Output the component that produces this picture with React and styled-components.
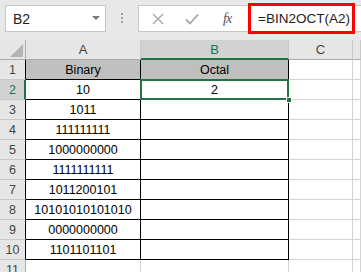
import React from "react";
import styled, { createGlobalStyle, css } from "styled-components";

const binary = [
  "10",
  "1011",
  "111111111",
  "1000000000",
  "1111111111",
  "1011200101",
  "10101010101010",
  "0000000000",
  "1101101101",
];

const GREEN = "#217346";

const GlobalStyle = createGlobalStyle`
  html, body {
    margin: 0;
    padding: 0;
    background: #ffffff;
    font-family: "Liberation Sans", Arial, sans-serif;
  }
`;

const Page = styled.div`
  width: 361px;
  height: 272px;
  overflow: hidden;
  background: #ffffff;
`;

const TopBar = styled.div`
  display: flex;
  align-items: flex-start;
  height: 40px;
  padding-left: 5px;
  background: #e8e8e8;
  box-sizing: border-box;
`;

const NameBox = styled.div`
  margin-top: 5px;
  width: 101px;
  height: 27px;
  box-sizing: border-box;
  background: #fff;
  border: 1px solid #c6c6c6;
  display: flex;
  align-items: center;
  justify-content: space-between;
  padding: 0 5px 0 7px;
  font-size: 14px;
  color: #222;
`;

const Arrow = styled.span`
  width: 0;
  height: 0;
  border-left: 4px solid transparent;
  border-right: 4px solid transparent;
  border-top: 4px solid #7a7a7a;
  margin-bottom: 2px;
`;

const Grip = styled.div`
  width: 32px;
  height: 36px;
  display: flex;
  align-items: center;
  justify-content: center;
`;

const FormulaBox = styled.div`
  margin-top: 5px;
  flex: 1;
  height: 27px;
  box-sizing: border-box;
  background: #fff;
  border: 1px solid #c6c6c6;
  border-right: none;
  display: flex;
  align-items: flex-start;
`;

const Tools = styled.div`
  width: 109px;
  height: 25px;
  display: flex;
  align-items: center;
  padding-left: 13px;
  gap: 21px;
  box-sizing: border-box;
`;

const Fx = styled.span`
  font-family: "Liberation Serif", serif;
  font-style: italic;
  font-size: 14px;
  color: #555;
  margin-left: 3px;
  letter-spacing: -1px;
`;

const Highlight = styled.div`
  margin-top: -3px;
  width: 107px;
  height: 31px;
  box-sizing: border-box;
  border: 3px solid #f00;
  display: flex;
  align-items: center;
  padding-left: 7px;
  font-size: 13.5px;
  color: #222;
`;

const Sheet = styled.div`
  display: grid;
  grid-template-columns: 26px 115px 148px 64px 1fr;
  grid-auto-rows: 20px;
  font-size: 12.5px;
`;

const ColHead = styled.div`
  box-sizing: border-box;
  background: ${(p) => (p.$active ? "#d2d2d2" : "#e6e6e6")};
  border-right: 1px solid #c8c8c8;
  border-bottom: ${(p) => (p.$active ? `2px solid ${GREEN}` : "1px solid #ababab")};
  color: ${(p) => (p.$active ? GREEN : "#444")};
  display: flex;
  align-items: center;
  justify-content: center;
  font-size: 13px;
  padding-top: ${(p) => (p.$active ? "1px" : "0")};
`;

const Corner = styled(ColHead)`
  position: relative;
  border-right: 1px solid #ababab;
  justify-content: flex-end;
  align-items: flex-end;
  padding: 0 2px 2px 0;
`;

const RowHead = styled.div`
  box-sizing: border-box;
  background: ${(p) => (p.$active ? "#d2d2d2" : "#e6e6e6")};
  border-bottom: 1px solid #c8c8c8;
  border-right: ${(p) =>
    p.$active ? `2px solid ${GREEN}` : p.$inTable ? "1px solid #000" : "1px solid #ababab"};
  color: ${(p) => (p.$active ? GREEN : "#444")};
  display: flex;
  align-items: center;
  justify-content: center;
  padding-left: ${(p) => (p.$active ? "1px" : "0")};
`;

const Cell = styled.div`
  box-sizing: border-box;
  position: relative;
  display: flex;
  align-items: center;
  justify-content: center;
  color: #000;
  background: ${(p) => (p.$head ? "#bfbfbf" : "#fff")};
  border-right: 1px solid ${(p) => (p.$table ? "#000" : "#d4d4d4")};
  border-bottom: 1px solid ${(p) => (p.$table ? "#000" : "#d4d4d4")};
  ${(p) =>
    p.$selected &&
    css`
      &::after {
        content: "";
        position: absolute;
        left: -1px;
        top: -1px;
        right: -1px;
        bottom: -1px;
        border: 2px solid ${GREEN};
      }
      &::before {
        content: "";
        position: absolute;
        right: -4px;
        bottom: -4px;
        width: 6px;
        height: 6px;
        background: ${GREEN};
        border: 1px solid #fff;
        box-sizing: border-box;
        z-index: 2;
      }
    `}
`;

const CrossIcon = () => (
  <svg width="12" height="12" viewBox="0 0 12 12">
    <path d="M1 1 L11 11 M11 1 L1 11" stroke="#a8a8a8" strokeWidth="1.4" fill="none" />
  </svg>
);

const CheckIcon = () => (
  <svg width="14" height="12" viewBox="0 0 14 12">
    <path d="M1 6.5 L5 10.5 L13 1.5" stroke="#a8a8a8" strokeWidth="1.8" fill="none" />
  </svg>
);

const GripIcon = () => (
  <svg width="3" height="11" viewBox="0 0 3 11">
    <rect x="0" y="0" width="2" height="2" fill="#a0a0a0" />
    <rect x="0" y="4" width="2" height="2" fill="#a0a0a0" />
    <rect x="0" y="8" width="2" height="2" fill="#a0a0a0" />
  </svg>
);

const CornerTriangle = () => (
  <svg width="13" height="13" viewBox="0 0 13 13">
    <path d="M13 0 L13 13 L0 13 Z" fill="#b4b4b4" />
  </svg>
);

export default function App() {
  const rows = [];
  for (let r = 1; r <= 11; r++) {
    const inTable = r <= 10;
    const a = r === 1 ? "Binary" : binary[r - 2] || "";
    const b = r === 1 ? "Octal" : r === 2 ? "2" : "";
    rows.push(
      <React.Fragment key={r}>
        <RowHead $active={r === 2} $inTable={inTable}>
          {r}
        </RowHead>
        <Cell $table={inTable} $head={r === 1}>
          {a}
        </Cell>
        <Cell $table={inTable} $head={r === 1} $selected={r === 2}>
          {b}
        </Cell>
        <Cell />
        <Cell />
      </React.Fragment>
    );
  }

  return (
    <Page>
      <GlobalStyle />
      <TopBar>
        <NameBox>
          B2
          <Arrow />
        </NameBox>
        <Grip>
          <GripIcon />
        </Grip>
        <FormulaBox>
          <Tools>
            <CrossIcon />
            <CheckIcon />
            <Fx>fx</Fx>
          </Tools>
          <Highlight>=BIN2OCT(A2)</Highlight>
        </FormulaBox>
      </TopBar>
      <Sheet>
        <Corner>
          <CornerTriangle />
        </Corner>
        <ColHead>A</ColHead>
        <ColHead $active>B</ColHead>
        <ColHead>C</ColHead>
        <ColHead />
        {rows}
      </Sheet>
    </Page>
  );
}
